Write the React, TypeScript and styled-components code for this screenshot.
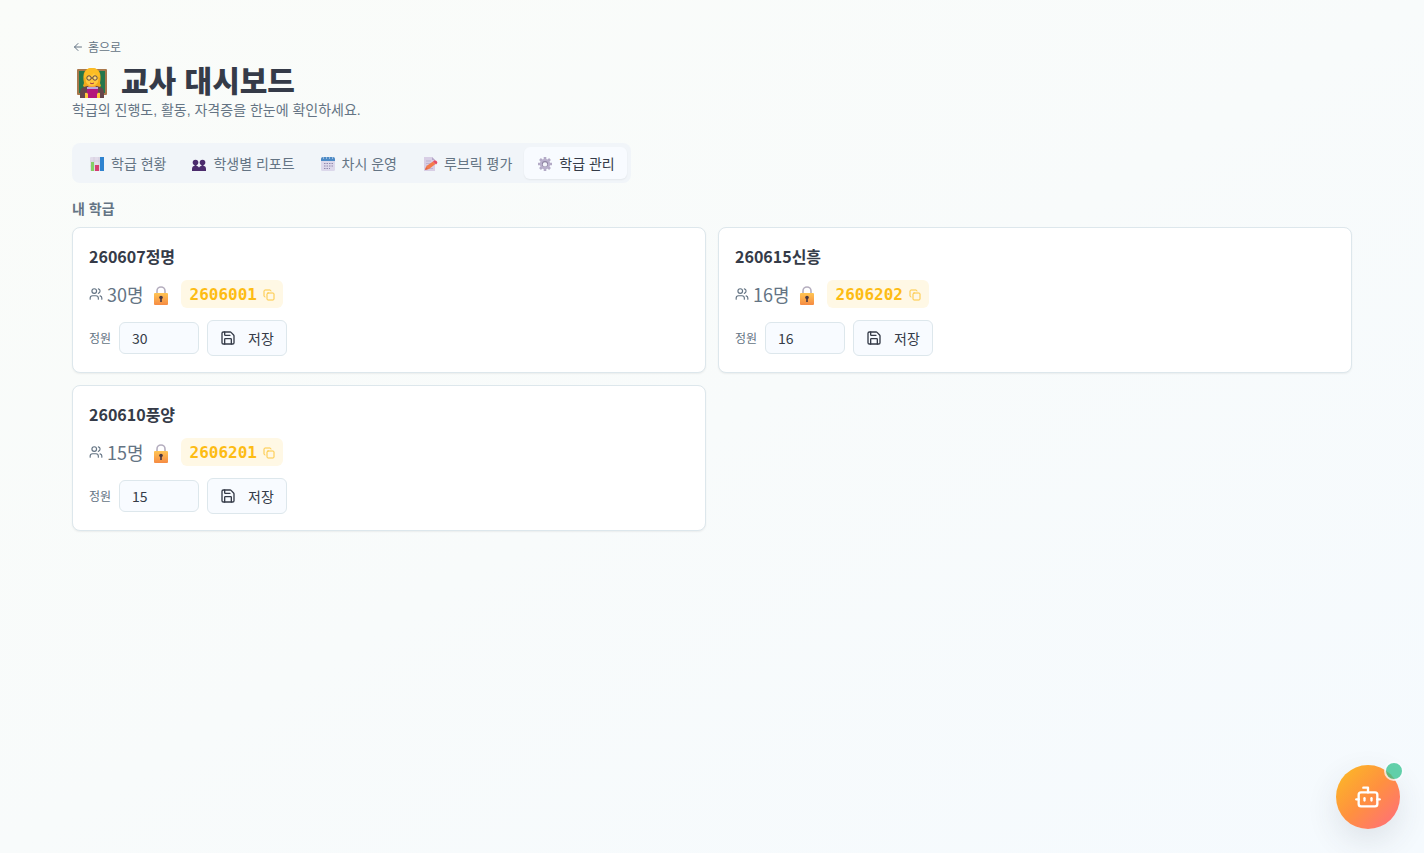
import React, { useState } from "react";
import styled, { createGlobalStyle, css } from "styled-components";
import { ArrowLeft, Users, Copy, Save, Bot } from "lucide-react";

const hangul = `"Liberation Sans", "Noto Sans CJK KR", sans-serif`;
const muted = "#647484";
const border = "#dde7ec";

const GlobalStyle = createGlobalStyle`
  *, *::before, *::after { box-sizing: border-box; }
  body {
    margin: 0;
    color: #353b48;
    font-family: "Noto Sans CJK KR", "Noto Sans", sans-serif;
    font-size: 16px;
    line-height: 24px;
  }
  button, input { font: inherit; color: inherit; }
  h1, h2, h3, p, ul { margin: 0; padding: 0; }
  ul { list-style: none; }
`;

const Page = styled.div`
  min-height: 100vh;
  padding: 36px 24px;
  background: linear-gradient(to bottom right, #fafcf9 0%, #f8fbfb 50%, #f5fafe 100%);
`;

const Container = styled.main`
  max-width: 1280px;
  margin: 0 auto;
`;

const HomeLink = styled.a`
  display: inline-flex;
  align-items: center;
  gap: 4px;
  color: ${muted};
  font-size: 12px;
  line-height: 16px;
  text-decoration: none;
`;

const Header = styled.header`
  display: flex;
  flex-direction: column;
  align-items: flex-start;
  padding-top: 3px;
  margin-bottom: 23px;
`;

const Title = styled.h1`
  display: flex;
  align-items: center;
  gap: 13px;
  padding-left: 4px;
  margin-top: 9px;
  font-family: ${hangul};
  font-size: 30px;
  font-weight: 900;
  line-height: 36px;
`;

const Subtitle = styled.p`
  color: ${muted};
  font-family: ${hangul};
  font-size: 14px;
  line-height: 20px;
`;

const Tabs = styled.nav`
  display: inline-flex;
  padding: 4px;
  border-radius: 8px;
  background: #f1f5f9;
`;

const Tab = styled.button<{ $active: boolean }>`
  display: flex;
  align-items: center;
  gap: 6px;
  padding: 7px 12px 5px 13px;
  border: 0;
  border-radius: 6px;
  background: transparent;
  color: ${muted};
  font-family: ${hangul};
  font-size: 14px;
  line-height: 20px;
  white-space: nowrap;
  cursor: pointer;
  ${(p) =>
    p.$active &&
    css`
      background: #f8fbff;
      color: #353b48;
      box-shadow: 0 1px 2px rgba(0, 0, 0, 0.06);
    `}
`;

const SectionTitle = styled.h2`
  margin: 16px 0 8px;
  color: ${muted};
  font-family: ${hangul};
  font-size: 14px;
  font-weight: 700;
  line-height: 20px;
`;

const ClassGrid = styled.ul`
  display: grid;
  grid-template-columns: repeat(2, minmax(0, 1fr));
  gap: 12px;
`;

const Card = styled.li`
  padding: 16px;
  border: 1px solid ${border};
  border-radius: 8px;
  background: #ffffff;
  box-shadow: 0 1px 2px rgba(0, 0, 0, 0.06);
`;

const ClassName = styled.h3`
  font-size: 16px;
  font-weight: 700;
  line-height: 24px;
`;

const InfoRow = styled.div`
  display: flex;
  align-items: center;
  gap: 8px;
  margin-top: 12px;
  color: ${muted};
`;

const Count = styled.span`
  display: flex;
  align-items: center;
  gap: 4px;
  font-size: 18px;
  line-height: 28px;
`;

const CodeButton = styled.button`
  display: flex;
  align-items: center;
  gap: 6px;
  height: 28px;
  padding: 1px 8px 0 9px;
  border: 0;
  border-radius: 6px;
  background: #fff8e5;
  color: #fdbc14;
  font-family: "DejaVu Sans Mono", monospace;
  font-weight: 700;
  cursor: pointer;
  svg { opacity: 0.8; }
`;

const CapacityForm = styled.form`
  display: flex;
  align-items: center;
  gap: 8px;
  margin-top: 12px;
`;

const CapacityLabel = styled.label`
  color: ${muted};
  font-size: 12px;
  line-height: 16px;
`;

const CapacityInput = styled.input`
  width: 80px;
  height: 32px;
  padding: 4px 12px;
  border: 1px solid ${border};
  border-radius: 6px;
  background: #f8fbff;
  font-size: 14px;
`;

const SaveButton = styled.button`
  display: flex;
  align-items: center;
  gap: 12px;
  height: 36px;
  padding: 0 12px;
  border: 1px solid ${border};
  border-radius: 6px;
  background: #f8fbff;
  font-size: 14px;
  line-height: 20px;
  cursor: pointer;
`;

const ChatButton = styled.button`
  position: fixed;
  right: 24px;
  bottom: 24px;
  display: grid;
  place-items: center;
  width: 64px;
  height: 64px;
  padding: 0;
  border: 0;
  border-radius: 50%;
  background: linear-gradient(135deg, #fbbd23 0%, #ff9040 50%, #ff6b81 100%);
  color: #ffffff;
  box-shadow: 0 12px 32px rgba(53, 59, 72, 0.12);
  cursor: pointer;
`;

const StatusDot = styled.span`
  position: absolute;
  top: -4px;
  right: -4px;
  width: 20px;
  height: 20px;
  border: 2px solid #f8fbff;
  border-radius: 50%;
  background: #30c28e;
  opacity: 0.75;
`;

const TeacherIcon = () => (
  <svg width="32" height="34" viewBox="0 -2 32 34" aria-hidden="true">
    <rect x="1" y="2" width="30" height="26" rx="1" fill="#a9784b" />
    <rect x="3" y="4" width="26" height="22" fill="#25764b" />
    <path d="M8 16C6 6 9 1 16 1s10 5 8 15l1 3-4 3H11l-4-3z" fill="#f0aa1c" />
    <path d="M4 31v-5c0-5 4-7 9-7h6c5 0 9 2 9 7v5z" fill="#67464b" />
    <path d="M12 18h8l-1 5h-6z" fill="#f2a13a" />
    <ellipse cx="16" cy="12" rx="6.5" ry="7" fill="#ffc83d" />
    <path d="M8 11c0-7 3-10 8-10s8 3 8 10c-3-1-5-3-6-5-2 3-6 4-10 5z" fill="#fcbd24" />
    <g fill="#ffd976" stroke="#493740" strokeWidth=".9">
      <circle cx="13" cy="11" r="2.2" /><circle cx="19" cy="11" r="2.2" />
    </g>
    <path d="M15.2 11h1.6" stroke="#493740" strokeWidth=".8" />
    <path d="M14 16q2 1.5 4 0" stroke="#a83a48" fill="none" />
    <rect x="11" y="21" width="11" height="10" fill="#b3167c" />
    <path d="M11 20h11v2H11z" fill="#b9a8dc" />
    <path d="M9 26q2-1 3 1v4H9zM21 27q1-2 3-1v5h-3z" fill="#ffc83d" />
  </svg>
);

const ChartIcon = () => (
  <svg width="16" height="16" viewBox="0 0 16 16" aria-hidden="true">
    <rect x="1" y="1" width="14" height="14" rx="1" fill="#e2dcea" />
    <path d="M5 1v14M10 1v14M1 5h14M1 10h14" stroke="#c8c0d3" strokeWidth=".5" />
    <rect x="2" y="6" width="3" height="9" fill="#83cf65" />
    <rect x="6" y="9" width="4" height="6" fill="#d43d70" />
    <rect x="11" y="1" width="4" height="14" fill="#2f83cf" />
  </svg>
);

const PeopleIcon = () => (
  <svg width="16" height="16" viewBox="0 0 16 16" fill="#4b2b6c" aria-hidden="true">
    <circle cx="4.5" cy="6.5" r="2.8" /><circle cx="11.5" cy="6.5" r="2.8" />
    <path d="M3.5 8h2v3h-2zM10.5 8h2v3h-2z" />
    <path d="M1 15v-2c0-2 1-3 2-3h3c1 0 2 1 2 2 0-1 1-2 2-2h3c1 0 2 1 2 3v2z" />
  </svg>
);

const CalendarIcon = () => (
  <svg width="16" height="16" viewBox="0 0 16 16" aria-hidden="true">
    <rect x="1" y="2" width="14" height="13" rx="1.5" fill="#dcd8eb" />
    <path d="M1 5V3q0-2 2-2h10q2 0 2 2v2z" fill="#4d8bc6" />
    <path d="M3 2h1M6 2h1M9 2h1M12 2h1" stroke="#e9edf6" />
    <path d="M4 7.5h9M4 10h9M4 12.5h6" stroke="#9189ad" strokeWidth="1.2" strokeDasharray="1.5 1" />
  </svg>
);

const MemoIcon = () => (
  <svg width="16" height="16" viewBox="0 0 16 16" aria-hidden="true">
    <path d="M2 1h8l3 3v11H2z" fill="#d8cee5" /><path d="M10 1v3h3" fill="#b6a8c9" />
    <path d="M4 5h5M4 7.5h7M4 10h4M4 12.5h7" stroke="#b5a9c5" strokeWidth=".7" />
    <path d="m3 14 1.5-4 6.5-4.5 2.5 2.5L7 13z" fill="#f47b4a" />
    <path d="m11 5.5 1-1q1-.5 2.500.5t.5 2.500l-1 1z" fill="#e64b65" /><path d="m3 14 1-3 2 2z" fill="#d9654a" />
  </svg>
);

const GearIcon = () => (
  <svg width="16" height="16" viewBox="0 0 16 16" fill="none" aria-hidden="true">
    <path d="M8 1v14M1 8h14M3 3l10 10M13 3 3 13" stroke="#b3aac6" strokeWidth="2.6" />
    <circle cx="8" cy="8" r="5.2" fill="#b9afcc" />
    <circle cx="8" cy="8" r="3" fill="#8d83a1" />
    <circle cx="8" cy="8.4" r="2.2" fill="#f4f5fb" />
  </svg>
);

const LockIcon = () => (
  <svg width="21" height="22" viewBox="0 -3 21 22" aria-hidden="true">
    <defs>
      <linearGradient id="lock-body" x1="0" y1="0" x2="0" y2="1">
        <stop stopColor="#ffc553" /><stop offset="1" stopColor="#f68b43" />
      </linearGradient>
    </defs>
    <path d="M5 10V5a4 4 0 0 1 8 0v5" fill="none" stroke="#b5aebf" strokeWidth="1.6" />
    <rect x="2" y="7" width="14" height="12" rx="1" fill="url(#lock-body)" />
    <circle cx="9" cy="11.5" r="1.8" fill="#493740" /><path d="M8.2 12.5h1.6V16H8.2z" fill="#493740" />
  </svg>
);

const tabs = [
  { label: "학급 현황", Icon: ChartIcon },
  { label: "학생별 리포트", Icon: PeopleIcon },
  { label: "차시 운영", Icon: CalendarIcon },
  { label: "루브릭 평가", Icon: MemoIcon },
  { label: "학급 관리", Icon: GearIcon },
];

const classes = [
  { name: "260607정명", capacity: 30, code: "2606001" },
  { name: "260615신흥", capacity: 16, code: "2606202" },
  { name: "260610풍양", capacity: 15, code: "2606201" },
];

export default function App() {
  const [active, setActive] = useState(4);
  return (
    <Page>
      <GlobalStyle />
      <Container>
        <Header>
          <HomeLink href="#"><ArrowLeft size={12} />홈으로</HomeLink>
          <Title><TeacherIcon />교사 대시보드</Title>
          <Subtitle>학급의 진행도, 활동, 자격증을 한눈에 확인하세요.</Subtitle>
        </Header>
        <Tabs>
          {tabs.map(({ label, Icon }, i) => (
            <Tab key={label} type="button" $active={i === active} onClick={() => setActive(i)}>
              <Icon />{label}
            </Tab>
          ))}
        </Tabs>
        <SectionTitle>내 학급</SectionTitle>
        <ClassGrid>
          {classes.map((c) => (
            <Card key={c.code}>
              <ClassName>{c.name}</ClassName>
              <InfoRow>
                <Count><Users size={14} />{c.capacity}명</Count>
                <LockIcon />
                <CodeButton type="button">{c.code}<Copy size={12} /></CodeButton>
              </InfoRow>
              <CapacityForm onSubmit={(e) => e.preventDefault()}>
                <CapacityLabel htmlFor={`capacity-${c.code}`}>정원</CapacityLabel>
                <CapacityInput id={`capacity-${c.code}`} defaultValue={c.capacity} inputMode="numeric" />
                <SaveButton type="submit"><Save size={16} />저장</SaveButton>
              </CapacityForm>
            </Card>
          ))}
        </ClassGrid>
      </Container>
      <ChatButton type="button" aria-label="챗봇">
        <Bot size={28} />
        <StatusDot />
      </ChatButton>
    </Page>
  );
}
